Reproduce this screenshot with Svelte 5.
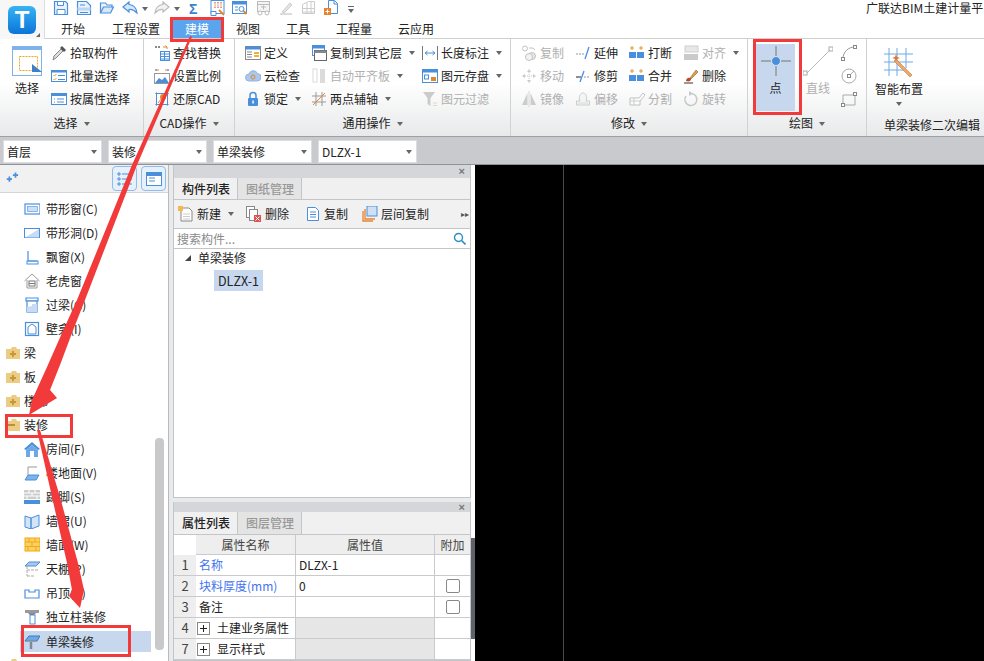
<script>
  const B = '#4a8fdc';
  const icons = {
    save: `<path d="M1.500 1.500h11l2 2v11h-13z" fill="#eaf3fc" stroke="${B}" stroke-width="1.200"/><path d="M4.500 1.500h6v4h-6zM4 9.500h8v5H4z" fill="#fff" stroke="${B}"/>`,
    doc: `<path d="M1.500 1.500h9l4 4v9h-13z" fill="#eaf3fc" stroke="${B}" stroke-width="1.200"/><path d="M1.500 7.500h13v3h-13z" fill="#bcd6f2"/><path d="M4 5h5M4 12.500h8" stroke="${B}"/>`,
    folder: `<path d="M1.500 13V3h5l1.500 2h5v2" fill="#eaf3fc" stroke="${B}" stroke-width="1.200"/><path d="M1.500 13l3-6h10l-3 6z" fill="#d6e7f8" stroke="${B}" stroke-width="1.200"/>`,
    undo: `<path d="M7 2L1 7l6 5V9.500c3-.5 5 .5 8 3.500-.5-5-3-8-8-8.500z" fill="#d6e7f8" stroke="${B}" stroke-width="1.200"/>`,
    redo: `<path d="M9 2l6 5-6 5V9.500c-3-.5-5 .5-8 3.500.5-5 3-8 8-8.500z" fill="#f2f2f2" stroke="#bbb" stroke-width="1.200"/>`,
    qbatch: `<rect x="1" y=".5" width="13" height="13" fill="#fff" stroke="${B}"/><path d="M4 2h8v6H4z" fill="#e9a08a"/><path d="M4 4h8M4 6h8M6.500 2v6M9.500 2v6" stroke="#fff"/><path d="M1 11.500h5v4H1z" fill="#fff" stroke="${B}"/><path d="M9 10l5 5" stroke="#e8842c" stroke-width="2"/>`,
    qfind: `<rect x=".5" y="1.500" width="14" height="12" fill="#fff" stroke="${B}"/><path d="M.5 1.500h14v3H.5z" fill="${B}"/><path d="M3 7h3M3 10h3" stroke="${B}"/><circle cx="9.500" cy="9" r="2.500" fill="#fff" stroke="${B}"/><path d="M11.500 11l3 3" stroke="#e8842c" stroke-width="2"/>`,
    qtable: `<rect x="1.500" y="1.500" width="12" height="10" fill="#f4f4f4" stroke="#bbb"/><path d="M1.500 4.500h12M5 7h5M7.500 5.500v4" stroke="#bbb"/><circle cx="4" cy="13" r="2" fill="#fff" stroke="#bbb"/><circle cx="11" cy="13" r="2" fill="#fff" stroke="#bbb"/>`,
    qpen: `<path d="M2 14h12" stroke="#ddd" stroke-width="2"/><path d="M4 12l8-9 2 2-8 8z" fill="#e4e4e4" stroke="#ccc"/>`,
    qgrid: `<path d="M1.500 4.500l6-3h6v12h-12zM1.500 8.500h12M1.500 12h12M6 3v11M10 2v12" fill="none" stroke="#ccc"/>`,
    qadd: `<path d="M4.500 .5h6l3 3v10h-9z" fill="#fff" stroke="${B}"/><path d="M10 .5v3.500h3.500" fill="none" stroke="${B}"/><rect x="0" y="8" width="7" height="7" fill="#e8842c"/><path d="M3.500 9.500v4M1.500 11.500h4" stroke="#fff"/>`,
    pick: `<path d="M2 15l1-4 7-7 2 2-7 7z" fill="#ddd" stroke="#888"/><path d="M9 3l2-2 4 4-2 2z" fill="#555"/>`,
    batch: `<rect x=".5" y="2.500" width="15" height="11" fill="#fff" stroke="${B}"/><path d="M.5 2.500h15v2H.5z" fill="${B}"/><path d="M2.500 7l1 1 2-2M2.500 11l1 1 2-2" stroke="#e8a02c" fill="none"/><path d="M7 7.500h7M7 11.500h7" stroke="${B}"/>`,
    attr: `<rect x=".5" y="2.500" width="15" height="11" fill="#fff" stroke="${B}"/><path d="M.5 2.500h15v2.500H.5z" fill="${B}"/><path d="M3 8h1M3 11h1M6 8h7M6 11h7" stroke="${B}"/>`,
    find: `<path d="M1 2h6" stroke="#888" stroke-width="2" stroke-dasharray="2 1"/><path d="M9 2h4l-1.500-1.500M13 2v2" stroke="#e8842c" fill="none"/><rect x="6.500" y="6.500" width="9" height="9" fill="#fff" stroke="${B}"/><path d="M7 9h8M7 11.500h8M7 14h8M10.500 7v8" stroke="${B}"/>`,
    scale: `<rect x=".5" y="5.500" width="15" height="10" fill="#fff" stroke="#999"/><path d="M1 15l4-5 3 2 3-3 4 6z" fill="${B}"/><path d="M1 2h4M11 2h4" stroke="#e8842c"/><path d="M2 1v2M14 1v2" stroke="${B}"/>`,
    cad: `<rect x="2.500" y="2.500" width="11" height="11" fill="#fff" stroke="${B}"/><path d="M1 2.500h14M1 13.500h14M2.500 1v14M13.500 1v14" stroke="${B}" stroke-width=".6"/><circle cx="9" cy="6" r="3" fill="#e8842c"/><path d="M4 12l4-5" stroke="#e8842c"/>`,
    define: `<rect x=".5" y="1.500" width="15" height="13" fill="#fff" stroke="#888"/><path d="M.5 1.500h15v3H.5z" fill="${B}"/><path d="M2 7h5M2 9.500h5M2 12h5" stroke="#888"/><path d="M9 7h5v2H9z" fill="#f0b040"/><path d="M9 11h5" stroke="#f0b040" stroke-width="2"/>`,
    cloud: `<path d="M4 13a3.500 3.500 0 0 1 0-7 4.500 4.500 0 0 1 8.500-.5 3.700 3.700 0 0 1-.5 7.500z" fill="#a9c8ec" stroke="#8fb4e0"/><circle cx="8" cy="9" r="2" fill="none" stroke="#e8842c"/>`,
    lock: `<path d="M5 7V4.500a3 3 0 0 1 6 0V7" fill="none" stroke="${B}" stroke-width="1.500"/><rect x="3" y="7" width="10" height="8" rx="1" fill="${B}"/><rect x="7.300" y="9.500" width="1.500" height="3" fill="#fff"/>`,
    copyfl: `<rect x="1.500" y=".5" width="12" height="10" fill="#fff" stroke="${B}"/><path d="M1.500 .5h12v3h-12z" fill="${B}"/><rect x="3.500" y="5.500" width="12" height="10" fill="#fff" stroke="#666"/><path d="M3.500 5.500h12v2.500h-12z" fill="#888"/>`,
    flat: `<rect x="2" y="1" width="4" height="13" fill="#fff" stroke="#ccc"/><rect x="9" y="1" width="5" height="14" fill="#ccc"/>`,
    axis: `<path d="M1 5h14M1 11h14M5 1v14M11 1v14" stroke="#999"/><path d="M2 14L14 2" stroke="#e8842c"/>`,
    len: `<path d="M.5 1v14M15.500 1v14" stroke="#777"/><path d="M3 8h10M3 8l2.500-2M3 8l2.500 2M13 8l-2.500-2M13 8l-2.500 2" stroke="${B}" fill="none"/>`,
    store: `<rect x=".5" y="1.500" width="15" height="13" fill="#fff" stroke="${B}"/><path d="M.5 1.500h15v3H.5z" fill="${B}"/><rect x="2.500" y="7" width="4" height="4" fill="none" stroke="${B}"/><rect x="9" y="9" width="5" height="4" fill="#e8842c"/>`,
    filter: `<path d="M1 1h12L8.500 7v8L5.500 13V7z" fill="#b8b8b8"/><path d="M11 12h4M11 14.500h4" stroke="#ccc"/>`,
    copy: `<circle cx="4" cy="3.500" r="2.500" fill="#fff" stroke="#aaa"/><circle cx="11" cy="11" r="3.500" fill="#ddd" stroke="#aaa"/><circle cx="8" cy="12" r="3.500" fill="#eee" stroke="#aaa"/><path d="M8 3h4l2 2" stroke="#aaa" fill="none"/>`,
    move: `<path d="M8 1l2 3H6zM8 15l2-3H6zM1 8l3-2v4zM15 8l-3-2v4z" fill="#b5b5b5"/><path d="M8 4v8M4 8h8" stroke="#b5b5b5" stroke-dasharray="1 1"/>`,
    mirror: `<path d="M6.500 2v12H1zM9.500 2v12H15z" fill="#bbb"/><path d="M8 0v16" stroke="#ccc"/>`,
    extend: `<path d="M1 9h8" stroke="#999" stroke-dasharray="2 1"/><path d="M10 14l4-12" stroke="${B}" stroke-width="1.300"/>`,
    trim: `<path d="M1 9h5" stroke="#222"/><path d="M9 9h6" stroke="#999" stroke-dasharray="2 1"/><path d="M5 14l4-11" stroke="${B}" stroke-width="1.300"/>`,
    offset: `<path d="M1.500 14v-4h3.500c-2-5 1-8 3-8s5 3 3 8h3.500v4z" fill="#f3f3f3" stroke="#bbb"/><path d="M3 12h10" stroke="#ccc"/>`,
    brk: `<path d="M3 1v4M1 3h4M12 1v4M10 3h4" stroke="#e8942c"/><path d="M0 7h7v6H0zM8 7h7v6H8z" fill="${B}"/>`,
    split: `<path d="M1 14V7h9l4-5 2 2-5 6v4z" fill="#fff" stroke="#aaa"/><path d="M1 10h10M5 7v7" stroke="#bbb"/>`,
    align: `<rect x="2" y="1" width="13" height="6" fill="#ddd" stroke="#bbb"/><rect x="1" y="9" width="14" height="6" fill="#b5b5b5"/>`,
    del: `<path d="M7 10L13 2l2 2-7 7z" fill="#e8a02c" stroke="#555" stroke-width=".5"/><path d="M3 13c0-2 2-4 4-3l1 1c0 2-2 3-5 2z" fill="#c2452c"/><path d="M1 15h9" stroke="#333"/>`,
    rotate: `<path d="M8 2.500a6 6 0 1 1-5 2.500" fill="none" stroke="#b5b5b5" stroke-width="1.500"/><path d="M6 0v5l4-2.500z" fill="#b5b5b5"/>`,
    add: `<path d="M2 8h6M5 5v6" stroke="${B}" stroke-width="2"/><path d="M9 3.500h6M12 .5v6" stroke="${B}" stroke-width="2"/>`,
    band: `<rect x="1" y="3" width="15" height="10" fill="none" stroke="${B}" stroke-width="1.200"/><rect x="3.500" y="5.500" width="10" height="5" fill="#cbdff5" stroke="${B}" stroke-width=".6"/>`,
    hole: `<rect x=".5" y="3.500" width="15" height="9" fill="#fff" stroke="${B}"/><path d="M1 12.500L15 4v8.500z" fill="#c7dcf3"/>`,
    bay: `<path d="M4 2v10h9" fill="none" stroke="${B}" stroke-width="1.200"/><rect x="3" y="12" width="11" height="3" fill="none" stroke="${B}"/>`,
    dormer: `<path d="M.5 8L8 1l7.500 7M3 7v8h10V7" fill="none" stroke="#999"/><rect x="5" y="8" width="6" height="5" fill="none" stroke="#777"/><path d="M5 10.500h6" stroke="#777"/>`,
    lintel: `<path d="M2 1h12v3H2z" fill="#fff" stroke="${B}" stroke-width="1.200"/><rect x="3" y="4" width="10" height="11" fill="#fff" stroke="${B}" stroke-width="1.200"/><path d="M3 15V10l5-1v-2h5v8z" fill="#c7dcf3"/>`,
    niche: `<rect x="1.500" y="1.500" width="13" height="13" fill="#fff" stroke="${B}" stroke-width="1.200"/><path d="M4 13V6l4-3 4 3v7z" fill="#fff" stroke="${B}"/>`,
    room: `<path d="M0 8l8-7 8 7-2 1-6-5-6 5z" fill="${B}"/><path d="M2 9l6-5 6 5v7H2z" fill="#6da8e8"/><rect x="6" y="10" width="4" height="6" fill="#fff"/>`,
    floor: `<path d="M4 10V2h9" fill="none" stroke="#999"/><path d="M4 10h11l-3 5H1z" fill="#7fb2ea" stroke="${B}"/>`,
    skirt: `<path d="M0 1h16v9H0z" fill="#ccc"/><path d="M0 4h16M0 7h16M5 1v3M11 1v3M8 4v3M3 7v3M13 7v3" stroke="#fff"/><rect x="0" y="11" width="16" height="4" fill="${B}"/>`,
    dado: `<path d="M1 3l6 2v11l-6-2zM7 5l8-3v11l-8 3z" fill="#d3e4f7" stroke="${B}"/>`,
    wall: `<rect x="1" y="1" width="15" height="13" fill="#fcd15f" stroke="#f0a818"/><path d="M1 5h15M1 9.500h15M5 1v4M11 1v4M8 5v4.500M4 9.500V14M12 9.500V14" stroke="#f0a818"/>`,
    ceil: `<path d="M5 1h11l-4 4H1z" fill="#a9c8ec" stroke="${B}"/><path d="M3 5v10M3 9h11M3 15h7" stroke="#aaa" stroke-dasharray="3 1"/>`,
    hang: `<path d="M1 5h4v2h6V5h4v8H1z" fill="#fff" stroke="${B}" stroke-width="1.200"/>`,
    col: `<path d="M1 1h14v3H1z" fill="#999"/><path d="M4 4h8l-2 2H6z" fill="#888"/><rect x="6" y="6" width="5" height="9" fill="#fff" stroke="${B}"/>`,
    beam: `<path d="M5 2h11l-3 5H1z" fill="#6da8e8" stroke="#3f78ba"/><path d="M2 7h11" stroke="#999"/><path d="M7 8v7" stroke="#7a8a99" stroke-width="2.500"/>`,
    newdoc: `<path d="M3 2h8l3 3v10H3z" fill="#fff" stroke="#888"/><path d="M5 8h7M5 10.500h7M5 13h7" stroke="#ccc"/><rect x="0" y="0" width="5" height="5" fill="#f5b84a"/>`,
    remove: `<rect x=".5" y=".5" width="8" height="11" fill="#fff" stroke="#888"/><rect x="3.500" y="3.500" width="8" height="11" fill="#fff" stroke="#888"/><rect x="8" y="9" width="7" height="7" fill="#d9534f"/><path d="M9.500 10.500l4 4M13.500 10.500l-4 4" stroke="#fff"/>`,
    dup: `<path d="M2.500 1.500h8l3 3v10h-11z" fill="#fff" stroke="${B}"/><path d="M5 6h6M5 8.500h6M5 11h6" stroke="${B}"/>`,
    floorcopy: `<path d="M1 5v10h10M3 3v10h10" fill="none" stroke="#e8842c" stroke-width="1.300"/><rect x="5" y="0" width="10" height="10" fill="#cfe0f5" stroke="${B}"/>`
  };

  // quick access toolbar: icon, left edge
  const quick = [
    ['save', 53], ['doc', 76], ['folder', 99], ['undo', 122], ['redo', 154],
    ['qbatch', 210], ['qfind', 232], ['qtable', 256], ['qpen', 278], ['qgrid', 301], ['qadd', 324]
  ];
  const tabs = ['开始', '工程设置', '建模', '视图', '工具', '工程量', '云应用'];

  const selectTools = [['pick', '拾取构件'], ['batch', '批量选择'], ['attr', '按属性选择']];
  const cadTools = [['find', '查找替换'], ['scale', '设置比例'], ['cad', '还原CAD']];
  const common = [
    [['define', '定义'], ['cloud', '云检查'], ['lock', '锁定', 'caret']],
    [['copyfl', '复制到其它层', 'caret'], ['flat', '自动平齐板', 'caret off'], ['axis', '两点辅轴', 'caret']],
    [['len', '长度标注', 'caret'], ['store', '图元存盘', 'caret'], ['filter', '图元过滤', 'off']]
  ];
  const modify = [
    [['copy', '复制', 'off'], ['move', '移动', 'off'], ['mirror', '镜像', 'off']],
    [['extend', '延伸'], ['trim', '修剪'], ['offset', '偏移', 'off']],
    [['brk', '打断'], ['brk', '合并'], ['split', '分割', 'off']],
    [['align', '对齐', 'caret off'], ['del', '删除'], ['rotate', '旋转', 'off']]
  ];

  const tree = [
    ['band', '带形窗(C)'], ['hole', '带形洞(D)'], ['bay', '飘窗(X)'], ['dormer', '老虎窗'],
    ['lintel', '过梁(G)'], ['niche', '壁龛(I)'],
    [null, '梁'], [null, '板'], [null, '楼梯'], ['open', '装修'],
    ['room', '房间(F)'], ['floor', '楼地面(V)'], ['skirt', '踢脚(S)'], ['dado', '墙裙(U)'],
    ['wall', '墙面(W)'], ['ceil', '天棚(P)'], ['hang', '吊顶(K)'], ['col', '独立柱装修'],
    ['beam', '单梁装修'], [null, '']
  ];

  const props = [
    ['1', '名称', 'DLZX-1', false, 'blue'],
    ['2', '块料厚度(mm)', '0', true, 'blue'],
    ['3', '备注', '', true, ''],
    ['4', '土建业务属性', '', false, 'fold'],
    ['7', '显示样式', '', false, 'fold']
  ];
</script>

{#snippet ico(name, size = 16)}
  <svg class="ico" width={size} height={size} viewBox="0 0 16 16">{@html icons[name]}</svg>
{/snippet}

{#snippet tool(t)}
  <div class="tool {t[2] ?? ''}">
    {@render ico(t[0])}
    <span>{t[1]}</span>
    {#if t[2]?.includes('caret')}<i class="tri"></i>{/if}
  </div>
{/snippet}

{#snippet folder(open)}
  <svg class="ico" width="16" height="14" viewBox="0 0 16 14">
    <path d="M1 3h5l1-2h4l1 2h3v10H1z" fill="#eccb83" />
    {#if open}
      <path d="M1 6h9v2H1z" fill="#b98f3e" />
    {:else}
      <path d="M8 5v6M5 8h6" stroke="#c7983a" stroke-width="2" />
    {/if}
  </svg>
{/snippet}

<div class="app">
  <header class="title">
    <div class="logo-box"><div class="logo">T</div><i class="grip"></i></div>
    <div class="qat">
      {#each quick as q}
        <span class="q" style="left:{q[1]}px">{@render ico(q[0], 16)}</span>
      {/each}
      <i class="tri q" style="left:142px;top:7px"></i>
      <i class="tri q" style="left:174px;top:7px"></i>
      <span class="q sigma" style="left:189px">Σ</span>
      <i class="q bar"></i>
      <i class="tri q" style="left:348px;top:9px"></i>
    </div>
    <div class="tabs">
      {#each tabs as tab, i}
        <div class="tab" class:on={i === 2}>{tab}</div>
      {/each}
    </div>
    <div class="apptitle">广联达BIM土建计量平</div>
  </header>

  <section class="ribbon">
    <div class="group g1">
      <div class="gbody">
        <div class="big select-big">
          <svg width="30" height="30" viewBox="0 0 30 30">
            <rect x=".5" y=".5" width="29" height="29" fill="#fff" stroke="#7fb2ea" />
            <path d="M0 0h30v4H0z" fill="#7fb2ea" />
            <rect x="7.500" y="10.500" width="18" height="14" fill="none" stroke="#f0a818" stroke-dasharray="2 1" />
            <path d="M20 18l10 8H20z" fill="#3f7fc8" />
          </svg>
          <span>选择</span>
        </div>
        <div class="col c1">{#each selectTools as t}{@render tool(t)}{/each}</div>
      </div>
      <div class="glabel">选择<i class="tri"></i></div>
    </div>

    <div class="group g2">
      <div class="gbody">
        <div class="col c2">{#each cadTools as t}{@render tool(t)}{/each}</div>
      </div>
      <div class="glabel">CAD操作<i class="tri"></i></div>
    </div>

    <div class="group g3">
      <div class="gbody">
        <div class="col w66">{#each common[0] as t}{@render tool(t)}{/each}</div>
        <div class="col w111">{#each common[1] as t}{@render tool(t)}{/each}</div>
        <div class="col">{#each common[2] as t}{@render tool(t)}{/each}</div>
      </div>
      <div class="glabel">通用操作<i class="tri"></i></div>
    </div>

    <div class="group g4">
      <div class="gbody">
        {#each modify as column}
          <div class="col w54">{#each column as t}{@render tool(t)}{/each}</div>
        {/each}
      </div>
      <div class="glabel">修改<i class="tri"></i></div>
    </div>

    <div class="group g5">
      <div class="gbody">
        <div class="big point">
          <svg width="30" height="30" viewBox="0 0 30 30">
            <path d="M15 0v30M0 15h30" stroke="#777" />
            <circle cx="15" cy="15" r="4.500" fill="#4a8fdc" stroke="#dbe7f6" />
          </svg>
          <span>点</span>
        </div>
        <div class="big line off">
          <svg width="30" height="30" viewBox="0 0 30 30">
            <path d="M3 28L28 3" stroke="#999" />
            <rect x="0" y="25" width="4" height="4" fill="#fff" stroke="#888" />
            <rect x="26" y="1" width="4" height="4" fill="#fff" stroke="#888" />
          </svg>
          <span>直线</span>
        </div>
        <div class="shapes">
          <svg width="16" height="16" viewBox="0 0 16 16"><path d="M2 14C2 7 7 2 14 2" fill="none" stroke="#999" /><rect x=".5" y="12.500" width="3" height="3" fill="#fff" stroke="#888" /><rect x="12.500" y=".5" width="3" height="3" fill="#fff" stroke="#888" /></svg>
          <svg width="16" height="16" viewBox="0 0 16 16"><circle cx="8" cy="8" r="7" fill="none" stroke="#aaa" /><path d="M8 8l5-5" stroke="#aaa" /><rect x="6.500" y="6.500" width="3" height="3" fill="#fff" stroke="#888" /></svg>
          <svg width="16" height="16" viewBox="0 0 16 16"><path d="M2 4h12v10H2z" fill="none" stroke="#aaa" /><rect x="12.500" y="1.500" width="3" height="3" fill="#fff" stroke="#888" /><rect x=".5" y="12.500" width="3" height="3" fill="#fff" stroke="#888" /></svg>
        </div>
      </div>
      <div class="glabel">绘图<i class="tri"></i></div>
    </div>

    <div class="group g6">
      <div class="gbody">
        <div class="big smart">
          <svg width="30" height="30" viewBox="0 0 30 30">
            <path d="M0 6h29M0 14h29M0 22h20M5 0v28M13 0v28M22 0v20" stroke="#6da8e8" />
            <path d="M12 11l16 16-2 2L10 13z" fill="#f0a868" stroke="#b5683a" stroke-width=".5" />
            <path d="M12 6l1 3 3 1-3 1-1 3-1-3-3-1 3-1z" fill="#e8742c" />
          </svg>
          <span>智能布置</span>
          <i class="tri"></i>
        </div>
      </div>
      <div class="glabel">单梁装修二次编辑</div>
    </div>
  </section>

  <div class="combos">
    <div class="combo">首层<i class="tri"></i></div>
    <div class="combo">装修<i class="tri"></i></div>
    <div class="combo">单梁装修<i class="tri"></i></div>
    <div class="combo">DLZX-1<i class="tri"></i></div>
  </div>

  <main class="work">
    <aside class="nav">
      <div class="navbar">
        {@render ico('add', 14)}
        <div class="navbtns">
          <button aria-label="列表"><svg width="16" height="14" viewBox="0 0 16 14"><path d="M1 1h2v2H1zM1 6h2v2H1zM1 11h2v2H1z" fill="none" stroke="#4a8fdc" /><path d="M5 2h10M5 7h10M5 12h10" stroke="#4a8fdc" /></svg></button>
          <button aria-label="详细"><svg width="16" height="14" viewBox="0 0 16 14"><rect x=".5" y=".5" width="15" height="13" fill="#fff" stroke="#4a8fdc" /><path d="M.5 .5h15v3H.5zM3 6h6M3 9h6" fill="#4a8fdc" stroke="#4a8fdc" /></svg></button>
        </div>
      </div>
      <ul class="navtree">
        {#each tree as row}
          {#if row[0] === null || row[0] === 'open'}
            <li class="navfolder">{@render folder(row[0] === 'open')}<span>{row[1]}</span></li>
          {:else}
            <li class="navitem" class:sel={row[1] === '单梁装修'}>{@render ico(row[0])}<span>{row[1]}</span></li>
          {/if}
        {/each}
      </ul>
      <div class="thumb"></div>
    </aside>

    <div class="mid">
      <section class="panel list">
        <div class="strip">×</div>
        <div class="ptabs"><div class="ptab on">构件列表</div><div class="ptab">图纸管理</div></div>
        <div class="ptools">
          <div class="tool w68">{@render ico('newdoc')}<span>新建</span><i class="tri"></i></div>
          <div class="tool w59">{@render ico('remove')}<span>删除</span></div>
          <div class="tool w57">{@render ico('dup')}<span>复制</span></div>
          <div class="tool">{@render ico('floorcopy')}<span>层间复制</span></div>
          <span class="more">▸▸</span>
        </div>
        <div class="search">
          <span>搜索构件...</span>
          <svg width="13" height="13" viewBox="0 0 13 13"><circle cx="5.500" cy="5.500" r="4" fill="none" stroke="#2a8fc0" stroke-width="1.400" /><path d="M8.500 8.500l4 4" stroke="#2a8fc0" stroke-width="1.600" /></svg>
        </div>
        <div class="ltree">
          <div class="lroot"><i class="corner"></i>单梁装修</div>
          <div class="lleaf">DLZX-1</div>
        </div>
      </section>

      <section class="panel attrs">
        <div class="strip">×</div>
        <div class="ptabs"><div class="ptab on">属性列表</div><div class="ptab">图层管理</div></div>
        <div class="grid">
          <div class="cell idx head"></div><div class="cell head">属性名称</div><div class="cell head">属性值</div><div class="cell head last">附加</div>
          {#each props as p}
            <div class="cell idx">{p[0]}</div>
            <div class="cell name {p[4]}">
              {#if p[4] === 'fold'}<i class="plus"></i>{/if}{p[1]}
            </div>
            <div class="cell val" class:shade={p[4] === 'fold'}>{p[2]}</div>
            <div class="cell chk">{#if p[3]}<i class="box"></i>{/if}</div>
          {/each}
        </div>
      </section>
    </div>

    <div class="splitter"><i></i></div>
    <div class="canvas"><i></i></div>
  </main>

  <svg class="marks" width="984" height="661" viewBox="0 0 984 661">
    <g fill="none" stroke="#f23a3a" stroke-width="3">
      <rect x="171.500" y="18.500" width="51" height="22" />
      <rect x="754.500" y="40.500" width="46" height="73" />
      <rect x="6.500" y="415.500" width="65" height="21" />
      <rect x="22.500" y="626.500" width="107" height="29" />
    </g>
    <g fill="#f23a3a">
      <path d="M190 36L192 37L137 165L85 300L72 333L60 365L50 390L57 398L29 415L32 400L47 367L62 333L77 300L132 165z" />
      <path d="M37 430L40 430L60 497L78 563L84 590L80 608L69 596L72 590L67 563L52 497z" />
    </g>
  </svg>
</div>

<style>
  :global(body) {
    margin: 0;
    background: #fff;
  }
  .app {
    position: relative;
    width: 984px;
    height: 661px;
    overflow: hidden;
    font: 12px/16px "Noto Sans CJK SC", "Noto Sans", sans-serif;
    color: #222;
  }
  i { display: inline-block; font-style: normal; }
  .ico { flex: none; }
  .tri {
    width: 0;
    height: 0;
    border: 3px solid transparent;
    border-top: 4px solid #666;
    border-bottom: 0;
  }

  /* title + tabs */
  .title {
    position: relative;
    height: 39px;
    background: #fff;
  }
  .logo-box {
    position: absolute;
    left: 0;
    top: 0;
    width: 45px;
    height: 39px;
    background: #f7f7f7;
    border-right: 1px solid #dcdcdc;
    box-sizing: border-box;
  }
  .logo {
    margin: 6px 0 0 8px;
    width: 28px;
    height: 28px;
    border-radius: 6px;
    background: linear-gradient(#35b4f4, #0d74d8);
    color: #fff;
    font: bold 24px/28px "Liberation Sans", sans-serif;
    text-align: center;
  }
  .grip {
    position: absolute;
    left: 36px;
    top: 33px;
    width: 0;
    height: 0;
    border-left: 4px solid transparent;
    border-bottom: 4px solid #666;
  }
  .qat { position: absolute; left: 0; top: 0; height: 18px; width: 370px; }
  .q { position: absolute; top: 0; line-height: 0; }
  .q.sigma { top: 1px; font: bold 14px/16px "Liberation Sans", sans-serif; color: #3f7fc8; }
  .bar { left: 348px; top: 6px; width: 6px; height: 1px; background: #666; }
  .tabs {
    position: absolute;
    left: 45px;
    right: 0;
    top: 20px;
    height: 18px;
    display: flex;
    border-bottom: 1px solid #cfcfcf;
  }
  .tab { padding: 0 13px; line-height: 18px; white-space: nowrap; }
  .tab:first-child { margin: 0 1px 0 3px; }
  .tab.on { background: #5aa5ee; color: #fff; margin-right: 2px; padding: 0 12px; }
  .apptitle {
    position: absolute;
    left: 866px;
    top: 0;
    white-space: nowrap;
  }

  /* ribbon */
  .ribbon {
    display: flex;
    height: 97px;
    background: linear-gradient(#fff 45%, #e8e9ea);
    border-bottom: 1px solid #9ea0a3;
    box-sizing: content-box;
  }
  .group {
    display: flex;
    flex-direction: column;
    border-right: 1px solid #d0d2d4;
    box-sizing: border-box;
  }
  .g1 { width: 144px; }
  .g2 { width: 91px; }
  .g3 { width: 276px; }
  .g4 { width: 237px; }
  .g5 { width: 119px; }
  .g6 { flex: 1; border: 0; }
  .gbody { flex: none; display: flex; height: 74px; }
  .glabel {
    height: 23px;
    line-height: 20px;
    text-align: center;
    white-space: nowrap;
  }
  .glabel .tri { margin-left: 6px; vertical-align: 2px; }
  .g6 .glabel { text-align: left; padding: 2px 0 0 17px; }
  .col {
    display: flex;
    flex-direction: column;
    padding-top: 3px;
  }
  .col .tool:first-child { margin-top: -1px; }
  .c1 { margin-left: 9px; }
  .c2 { margin-left: 10px; }
  .g3 .gbody { padding-left: 10px; }
  .g4 .gbody { padding-left: 10px; }
  .w66 { width: 66px; }
  .w111 { width: 111px; }
  .w54 { width: 54px; }
  .tool {
    display: flex;
    align-items: center;
    gap: 3px;
    height: 23px;
    white-space: nowrap;
  }
  .tool .tri { margin-left: 4px; }
  .off { color: #b0b0b0; }
  .off > svg { opacity: 0.7; }
  .big {
    display: flex;
    flex-direction: column;
    align-items: center;
    white-space: nowrap;
  }
  .select-big { margin-left: 12px; padding-top: 7px; width: 30px; }
  .select-big span { margin-top: 4px; }
  .point {
    margin: 5px 0 0 8px;
    width: 39px;
    height: 67px;
    box-sizing: border-box;
    padding-top: 2px;
    background: #c7d7ee;
  }
  .point span { margin-top: 4px; }
  .line { width: 30px; margin: 7px 0 0 8px; }
  .line svg { margin-bottom: 4px; }
  .shapes {
    display: flex;
    flex-direction: column;
    gap: 7px;
    margin: 6px 0 0 8px;
  }
  .smart { margin: 9px 0 0 7px; width: 50px; }
  .smart span { margin-top: 3px; }
  .smart .tri { margin-top: 5px; }

  /* combos */
  .combos {
    height: 28px;
    box-sizing: border-box;
    padding: 3px 0 0 3px;
    display: flex;
    gap: 6px;
    background: #c8cace;
    border-bottom: 1px solid #8f9296;
  }
  .combo {
    position: relative;
    width: 99px;
    height: 23px;
    box-sizing: border-box;
    padding-left: 3px;
    background: #fff;
    border: 1px solid #dcdde0;
    line-height: 21px;
  }
  .combo .tri { position: absolute; right: 4px; top: 9px; }

  /* work area */
  .work { display: flex; height: 496px; background: #e9eaec; }
  .nav {
    position: relative;
    width: 169px;
    flex: none;
    background: #fff;
    border-right: 1px solid #b8babd;
    box-sizing: border-box;
    overflow: hidden;
  }
  .navbar {
    height: 28px;
    box-sizing: border-box;
    padding-left: 5px;
    display: flex;
    align-items: center;
    justify-content: space-between;
    background: #f1f1f2;
    border-bottom: 1px solid #d5d5d5;
  }
  .navbtns { display: flex; gap: 4px; margin-right: 2px; }
  .navbtns button {
    width: 25px;
    height: 25px;
    padding: 0;
    display: flex;
    align-items: center;
    justify-content: center;
    background: #e6f1fc;
    border: 1px solid #8dbcee;
    border-radius: 4px;
  }
  .navtree { list-style: none; margin: 4px 0 0; padding: 0; }
  .navtree li {
    display: flex;
    align-items: center;
    height: 24px;
    gap: 6px;
    white-space: nowrap;
  }
  .navtree .navfolder { padding-left: 5px; gap: 3px; }
  .navitem { padding-left: 24px; }
  .navtree .sel {
    background: #c7d7ee;
    width: 127px;
    height: 21px;
    margin: 2px 0 1px 20px;
    padding-left: 4px;
  }
  .thumb {
    position: absolute;
    left: 155px;
    top: 273px;
    width: 9px;
    height: 212px;
    border-radius: 4px;
    background: #c9c9c9;
  }

  .mid {
    width: 298px;
    flex: none;
    margin-left: 4px;
    display: flex;
    flex-direction: column;
    gap: 4px;
  }
  .panel {
    background: #fff;
    border: 1px solid #c3c5c8;
    border-top: 0;
    display: flex;
    flex-direction: column;
  }
  .list { height: 333px; }
  .attrs { flex: 1; }
  .strip {
    height: 10px;
    background: #d4d6da;
    color: #777;
    font: bold 11px/10px "Liberation Sans", sans-serif;
    text-align: right;
    padding-right: 5px;
    flex: none;
  }
  .list .strip { height: 13px; line-height: 13px; }
  .ptabs {
    height: 23px;
    display: flex;
    background: #f0f0f0;
    border-bottom: 1px solid #c3c5c8;
    flex: none;
    box-sizing: border-box;
  }
  .list .ptabs { height: 22px; }
  .ptab {
    width: 64px;
    box-sizing: border-box;
    padding-left: 8px;
    line-height: 21px;
    color: #999;
    background: #e4e4e4;
    border-right: 1px solid #c3c5c8;
    font-weight: 500;
  }
  .ptab.on { color: #222; background: #f0f0f0; }
  .ptools {
    position: relative;
    height: 29px;
    flex: none;
    display: flex;
    align-items: center;
    padding-left: 4px;
    background: #f1f1f1;
    border-bottom: 1px solid #c3c5c8;
    box-sizing: border-box;
  }
  .w68 { width: 68px; }
  .w59 { width: 59px; }
  .w57 { width: 57px; }
  .more { position: absolute; right: 1px; top: 6px; font-size: 8px; color: #555; }
  .search {
    height: 20px;
    flex: none;
    display: flex;
    align-items: center;
    justify-content: space-between;
    padding: 0 4px 0 3px;
    color: #8a8a8a;
    border-bottom: 1px solid #c3c5c8;
    box-sizing: border-box;
  }
  .lroot { display: flex; align-items: center; height: 18px; padding-left: 11px; gap: 7px; margin-bottom: 3px; }
  .corner {
    width: 0;
    height: 0;
    border-left: 6px solid transparent;
    border-bottom: 6px solid #444;
  }
  .lleaf {
    margin-left: 40px;
    width: 49px;
    height: 21px;
    padding-left: 4px;
    box-sizing: border-box;
    line-height: 21px;
    background: #c7d7ee;
    font-size: 12.500px;
  }

  .grid {
    display: grid;
    grid-template-columns: 22px 100px 139px 1fr;
    grid-template-rows: 20px;
    grid-auto-rows: 21px;
  }
  .cell {
    display: flex;
    align-items: center;
    padding-left: 3px;
    box-sizing: border-box;
    border-right: 1px solid #c8cacc;
    border-bottom: 1px solid #c8cacc;
    white-space: nowrap;
  }
  .head { background: #eeeeee; justify-content: center; padding: 0; color: #444; }
  .idx { background: #eee; justify-content: center; padding: 0; border-right: 0; color: #444; font-size: 13px; }
  .idx.head { background: #fff; border: 0; }
  .head.last { border-right: 0; }
  .blue { color: #3f74f0; }
  .shade { background: #e6e6e6; }
  .chk { justify-content: center; padding: 0; border-right: 0; }
  .box { width: 12px; height: 12px; border: 1px solid #888; border-radius: 2px; background: #fff; }
  .plus {
    width: 11px;
    height: 11px;
    margin: 0 7px 0 -2px;
    border: 1px solid #888;
    background:
      linear-gradient(#222, #222) center / 7px 1px no-repeat,
      linear-gradient(#222, #222) center / 1px 7px no-repeat;
  }

  .splitter {
    width: 4px;
    flex: none;
    background: #fff;
    display: flex;
    align-items: flex-start;
  }
  .splitter i { width: 4px; height: 101px; margin-top: 373px; background: #5f6368; }
  .canvas { flex: 1; background: #000; padding-left: 88px; }
  .canvas i { display: block; width: 1px; height: 100%; background: #4a4a4a; }

  .marks { position: absolute; left: 0; top: 0; pointer-events: none; }
</style>
